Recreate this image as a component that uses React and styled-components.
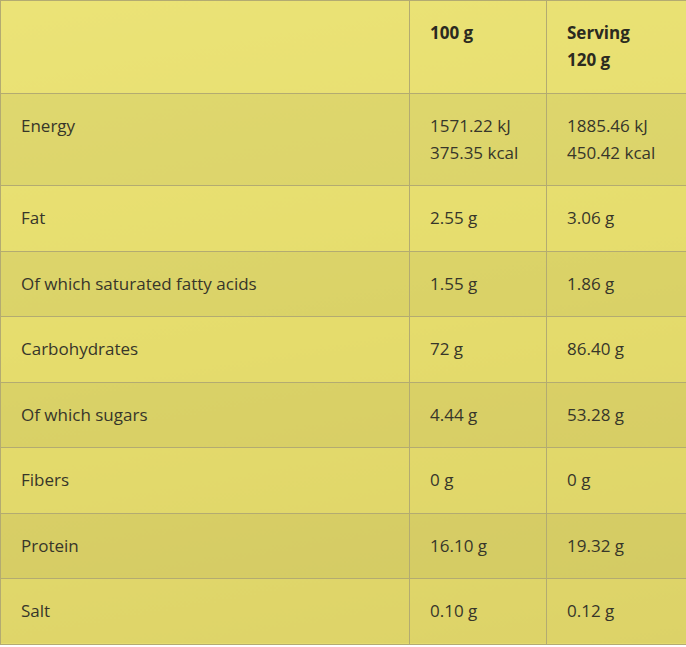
import React from 'react';
import styled, { createGlobalStyle } from 'styled-components';

const GlobalStyle = createGlobalStyle`
  html, body {
    margin: 0;
    padding: 0;
    background: #ffffff;
  }
`;

const Table = styled.table`
  width: 686px;
  border-collapse: collapse;
  table-layout: fixed;
  font-family: "Open Sans", "Noto Sans", sans-serif;
  font-size: 17px;
  line-height: 26.5px;
  color: #37362a;
  background: linear-gradient(170deg, #ebe377 0%, #e5dc6c 50%, #dcd268 100%);
`;

const Row = styled.tr`
  background: ${(p) => (p.$shade ? 'rgba(90, 80, 40, 0.07)' : 'transparent')};
`;

const Cell = styled.td`
  border: 1px solid #b3ab71;
  padding: 19px 20px ${(p) => (p.$head ? '20px' : '19px')};
  vertical-align: top;
  font-weight: ${(p) => (p.$head ? 700 : 400)};
  color: ${(p) => (p.$head ? '#2b2a20' : '#37362a')};
`;

const rows = [
  ['Energy', ['1571.22 kJ', '375.35 kcal'], ['1885.46 kJ', '450.42 kcal']],
  ['Fat', ['2.55 g'], ['3.06 g']],
  ['Of which saturated fatty acids', ['1.55 g'], ['1.86 g']],
  ['Carbohydrates', ['72 g'], ['86.40 g']],
  ['Of which sugars', ['4.44 g'], ['53.28 g']],
  ['Fibers', ['0 g'], ['0 g']],
  ['Protein', ['16.10 g'], ['19.32 g']],
  ['Salt', ['0.10 g'], ['0.12 g']],
];

function Lines({ items }) {
  return items.map((t, i) => (
    <React.Fragment key={i}>
      {i > 0 && <br />}
      {t}
    </React.Fragment>
  ));
}

export default function App() {
  return (
    <>
      <GlobalStyle />
      <Table>
        <colgroup>
          <col style={{ width: 409 }} />
          <col style={{ width: 137 }} />
          <col style={{ width: 140 }} />
        </colgroup>
        <thead>
          <Row>
            <Cell $head />
            <Cell $head>100 g</Cell>
            <Cell $head>
              Serving
              <br />
              120 g
            </Cell>
          </Row>
        </thead>
        <tbody>
          {rows.map(([name, a, b], i) => (
            <Row key={name} $shade={i % 2 === 0}>
              <Cell>{name}</Cell>
              <Cell>
                <Lines items={a} />
              </Cell>
              <Cell>
                <Lines items={b} />
              </Cell>
            </Row>
          ))}
        </tbody>
      </Table>
    </>
  );
}
